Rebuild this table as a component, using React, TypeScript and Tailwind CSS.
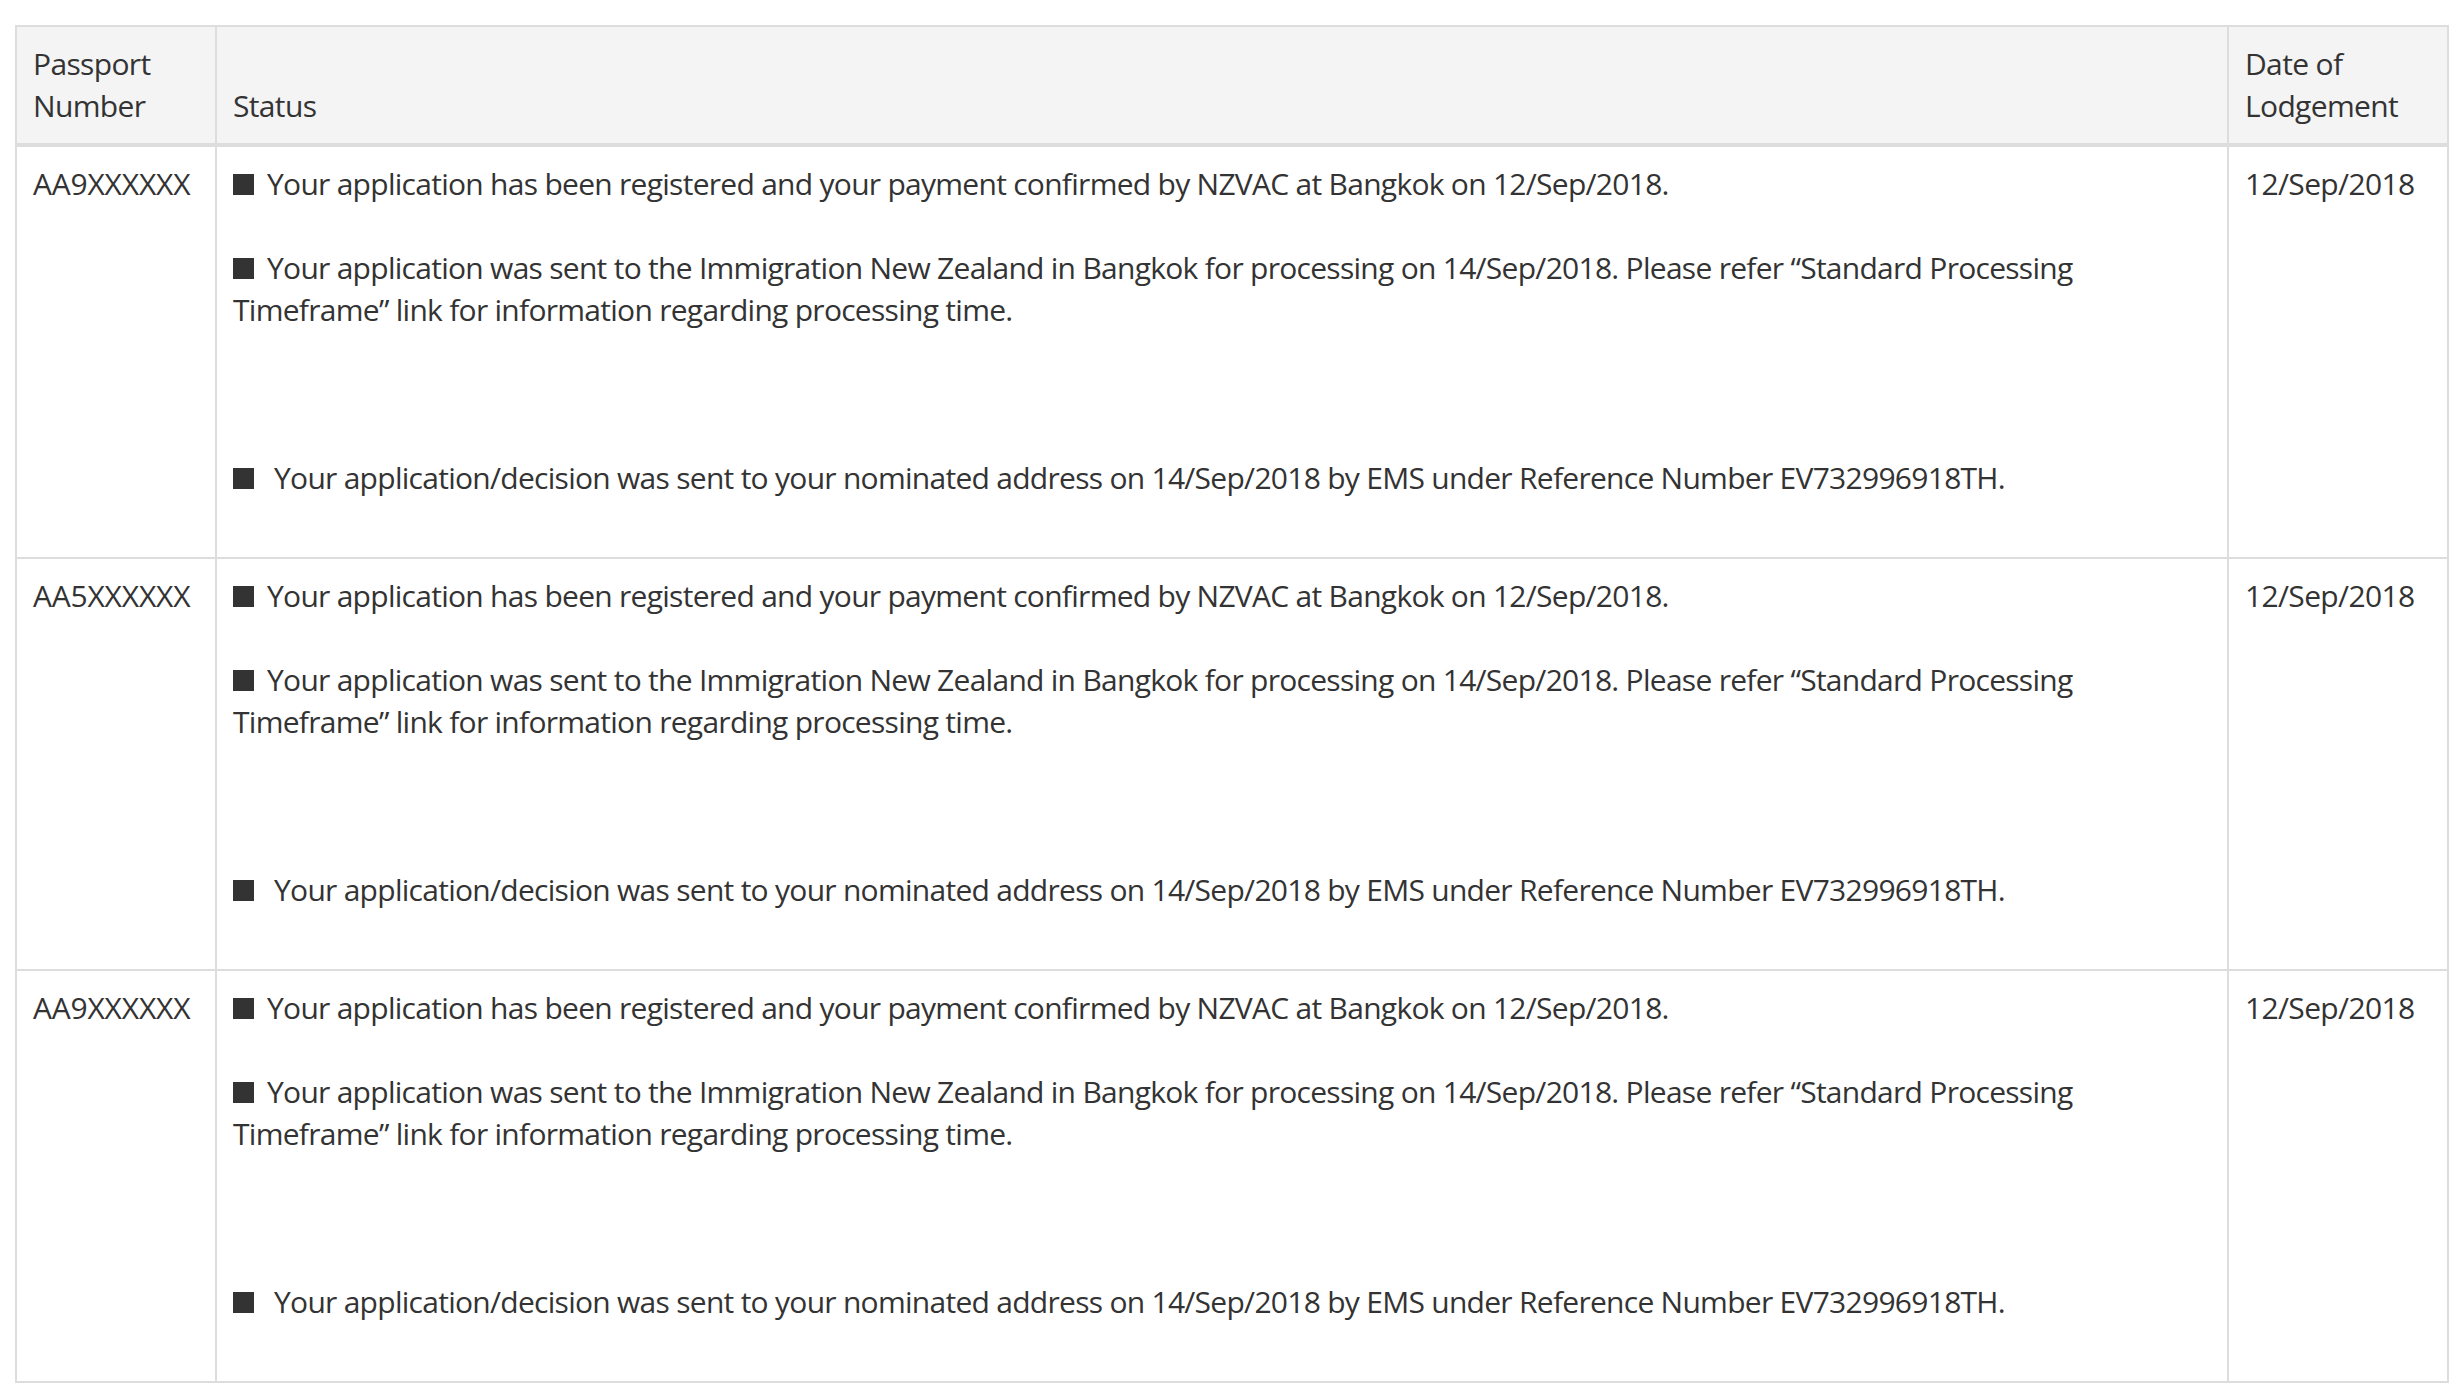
const rows = [
	{ passport: 'AA9XXXXXX', date: '12/Sep/2018' },
	{ passport: 'AA5XXXXXX', date: '12/Sep/2018' },
	{ passport: 'AA9XXXXXX', date: '12/Sep/2018' }
]

function Bullet({ wide }: { wide?: boolean }) {
	return (
		<span
			className={
				wide
					? 'mr-[20px] inline-block h-[21px] w-[21px] bg-[#333]'
					: 'mr-[13px] inline-block h-[21px] w-[21px] bg-[#333]'
			}
		/>
	)
}

function StatusCell() {
	return (
		<div className="pb-[42px] tracking-[-0.72px]">
			<div>
				<Bullet />
				Your application has been registered and your payment confirmed by
				NZVAC at Bangkok on 12/Sep/2018.
			</div>
			<div className="mt-[42px]">
				<Bullet />
				Your application was sent to the Immigration New Zealand in Bangkok for
				processing on 14/Sep/2018. Please refer “Standard Processing
				<br />
				Timeframe” link for information regarding processing time.
			</div>
			<div className="mt-[126px]">
				<Bullet wide />
				Your application/decision was sent to your nominated address on
				14/Sep/2018 by EMS under Reference Number EV732996918TH.
			</div>
		</div>
	)
}

export default function App() {
	return (
		<div className="min-h-screen bg-white px-[15px] pt-[25px] font-['Open_Sans',sans-serif] text-[30px] leading-[42px] tracking-[-0.65px] text-[#333]">
			<table className="w-full table-fixed border-collapse border-2 border-[#ddd]">
				<thead>
					<tr className="bg-[#f4f4f4]">
						<th className="w-[200px] border-2 border-b-4 border-[#ddd] p-[16px] text-left align-bottom font-normal">
							Passport Number
						</th>
						<th className="border-2 border-b-4 border-[#ddd] p-[16px] text-left align-bottom font-normal">
							Status
						</th>
						<th className="w-[220px] border-2 border-b-4 border-[#ddd] p-[16px] text-left align-bottom font-normal">
							Date of Lodgement
						</th>
					</tr>
				</thead>
				<tbody>
					{rows.map((row, i) => (
						<tr key={i}>
							<td className="border-2 border-[#ddd] p-[16px] align-top whitespace-nowrap tracking-[-0.2px]">
								{row.passport}
							</td>
							<td className="border-2 border-[#ddd] p-[16px] align-top">
								<StatusCell />
							</td>
							<td className="border-2 border-[#ddd] p-[16px] align-top">
								{row.date}
							</td>
						</tr>
					))}
				</tbody>
			</table>
		</div>
	)
}
